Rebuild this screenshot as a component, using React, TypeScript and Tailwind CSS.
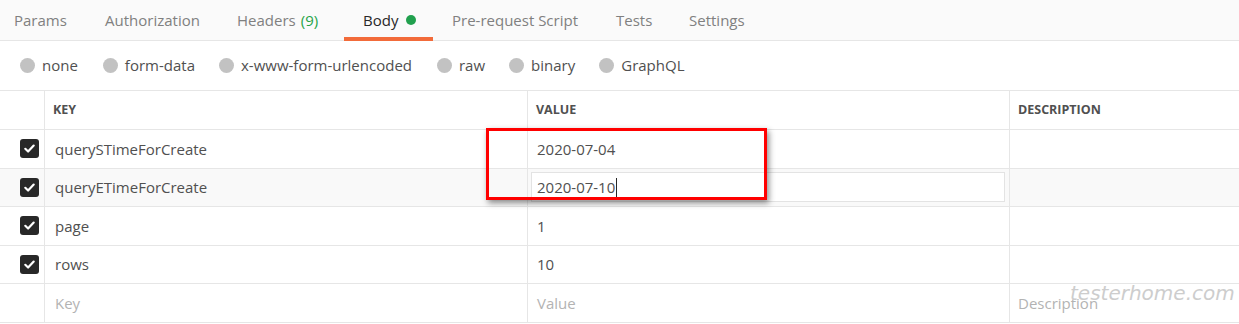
import React from "react";

const font = { fontFamily: '"Open Sans", "Noto Sans", sans-serif' };

function Check() {
  return (
    <div className="w-[19px] h-[19px] rounded-[3px] bg-[#282828] flex items-center justify-center">
      <svg width="13" height="13" viewBox="0 0 13 13">
        <path d="M2.3 6.8 L5.1 9.5 L10.7 3.6" fill="none" stroke="white" strokeWidth="2.2" strokeLinecap="round" strokeLinejoin="round" />
      </svg>
    </div>
  );
}

function Radio({ label, selected, ml }: { label: string; selected?: boolean; ml: string }) {
  return (
    <div className={`flex items-center ${ml}`}>
      {selected ? (
        <div className="w-[15px] h-[15px] rounded-full bg-[#d4d4d4] flex items-center justify-center">
          <div className="w-[8px] h-[8px] rounded-full bg-[#f26b3a]" />
        </div>
      ) : (
        <div className="w-[15px] h-[15px] rounded-full bg-[#c2c2c2]" />
      )}
      <span className="ml-[7px] text-[15px] text-[#505050] leading-none">{label}</span>
    </div>
  );
}

type Row = { key: string; value: string; checked: boolean; hover?: boolean; input?: boolean; placeholder?: boolean };

const rows: Row[] = [
  { key: "querySTimeForCreate", value: "2020-07-04", checked: true },
  { key: "queryETimeForCreate", value: "2020-07-10", checked: true, hover: true, input: true },
  { key: "page", value: "1", checked: true },
  { key: "rows", value: "10", checked: true },
  { key: "Key", value: "Value", checked: false, placeholder: true },
];

export default function App() {
  return (
    <div className="relative w-[1239px] h-[324px] bg-white overflow-hidden" style={font}>
      {/* Tabs */}
      <div className="h-[41px] bg-[#fafafa] border-b border-[#e6e6e6] flex items-stretch text-[15px] text-[#808080]">
        <div className="w-[105px] pl-[14px] flex items-center">Params</div>
        <div className="w-[132px] flex items-center">Authorization</div>
        <div className="w-[107px] flex items-center">
          Headers<span className="ml-[5px] text-[#26a348]">(9)</span>
        </div>
        <div className="relative w-[89px] pl-[19px] flex items-center text-[#282828]">
          Body
          <span className="ml-[8px] w-[10px] h-[10px] rounded-full bg-[#21a04e]" />
          <div className="absolute left-0 right-0 bottom-[-1px] h-[4px] bg-[#f26b3a]" />
        </div>
        <div className="w-[183px] pl-[19px] flex items-center">Pre-request Script</div>
        <div className="w-[73px] flex items-center">Tests</div>
        <div className="flex items-center">Settings</div>
      </div>

      {/* Radios */}
      <div className="h-[49px] flex items-center pl-[20px]">
        <Radio label="none" ml="ml-0" />
        <Radio label="form-data" ml="ml-[25px]" />
        <Radio label="x-www-form-urlencoded" ml="ml-[24px]" />
        <Radio label="raw" ml="ml-[25px]" />
        <Radio label="binary" ml="ml-[24px]" />
        <Radio label="GraphQL" ml="ml-[24px]" />
      </div>

      {/* Table */}
      <div className="border-t border-[#e6e6e6]">
        <div className="h-[39px] flex border-b border-[#e6e6e6] text-[12.5px] font-bold text-[#505050]">
          <div className="w-[45px] border-r border-[#e6e6e6]" />
          <div className="w-[483px] border-r border-[#e6e6e6] pl-[8px] flex items-center">KEY</div>
          <div className="w-[482px] border-r border-[#e6e6e6] pl-[8px] flex items-center">VALUE</div>
          <div className="flex-1 pl-[8px] flex items-center">DESCRIPTION</div>
        </div>
        {rows.map((r, i) => (
          <div
            key={i}
            className={`h-[38.5px] flex border-b border-[#e6e6e6] text-[15px] ${r.hover ? "bg-[#f9f9f9]" : "bg-white"} ${r.placeholder ? "text-[#b3b3b3]" : "text-[#505050]"}`}
          >
            <div className="w-[45px] border-r border-[#e6e6e6] flex items-center pl-[20px]">
              {r.checked && <Check />}
            </div>
            <div className="w-[483px] border-r border-[#e6e6e6] pl-[10px] flex items-center">{r.key}</div>
            <div className="w-[482px] border-r border-[#e6e6e6] flex items-center">
              {r.input ? (
                <div className="ml-[3px] w-[474px] h-[30px] bg-white border border-[#e3e3e3] pl-[5px] flex items-center">
                  {r.value}
                  <span className="ml-[1px] w-px h-[19px] bg-[#282828]" />
                </div>
              ) : (
                <span className="pl-[9px]">{r.value}</span>
              )}
            </div>
            <div className="flex-1 pl-[8px] flex items-center">{r.placeholder ? "Description" : ""}</div>
          </div>
        ))}
      </div>

      {/* Red annotation box */}
      <div className="absolute left-[486px] top-[128px] w-[281px] h-[72px] border-[3px] border-[#ff0000] shadow-[2px_3px_6px_rgba(0,0,0,0.45)]" />

      {/* Watermark */}
      <div
        className="absolute left-[1070px] top-[283px] text-[20px] text-[#cdcdcd] italic leading-none"
        style={{ fontFamily: '"DejaVu Sans", sans-serif', fontWeight: 200 }}
      >
        testerhome.com
      </div>
    </div>
  );
}
